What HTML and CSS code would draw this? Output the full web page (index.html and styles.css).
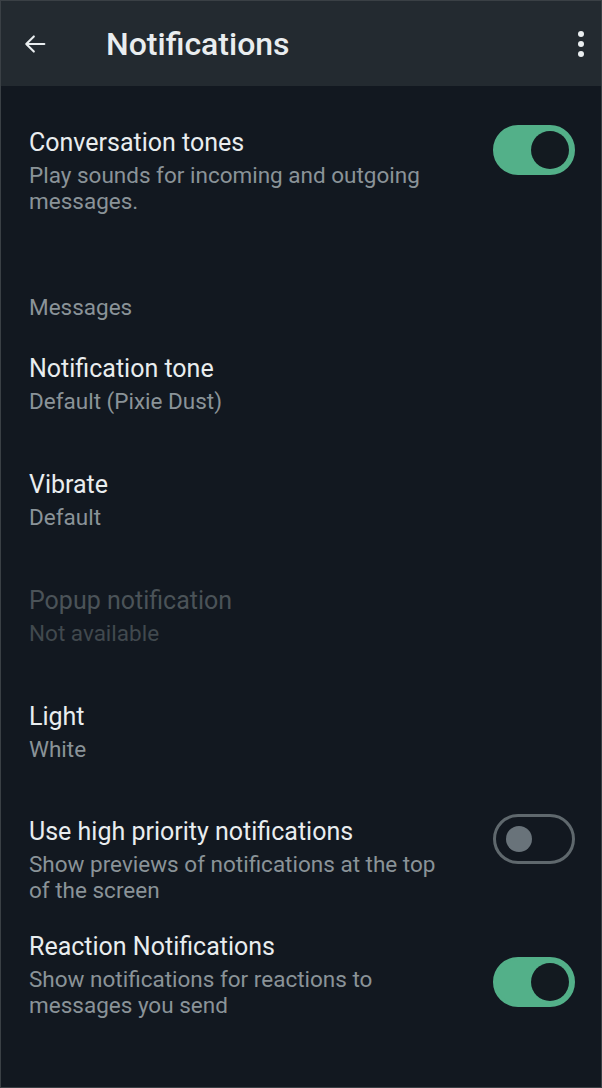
FILE: index.html
```html
<!DOCTYPE html>
<html>
  <head>
    <meta charset="UTF-8">
    <meta name="viewport" content="width=device-width,initial-scale=1">
    <title>Notifications</title>
    <link rel="stylesheet" href="styles.css">
  </head>
  <body>
    <div class="screen">
      <header class="appbar">
        <button class="icon-btn back" title="Back">
          <svg width="28" height="28" viewBox="0 0 24 24"><path d="M20 12H4.5M11 5.5L4.5 12l6.5 6.5" fill="none" stroke="#e9edef" stroke-width="1.8" stroke-linecap="round" stroke-linejoin="round"/></svg>
        </button>
        <h1>Notifications</h1>
        <button class="icon-btn more" title="More options">
          <svg width="8" height="28" viewBox="0 0 8 28"><circle cx="4" cy="4" r="3" fill="#e9edef"/><circle cx="4" cy="14" r="3" fill="#e9edef"/><circle cx="4" cy="24" r="3" fill="#e9edef"/></svg>
        </button>
      </header>

      <main class="list">
        <div class="item toggle spaced">
          <div class="text">
            <div class="title">Conversation tones</div>
            <div class="sub">Play sounds for incoming and outgoing messages.</div>
          </div>
          <span class="switch on"><span class="knob"></span></span>
        </div>

        <div class="section-title">Messages</div>

        <div class="item">
          <div class="text">
            <div class="title">Notification tone</div>
            <div class="sub">Default (Pixie Dust)</div>
          </div>
        </div>
        <div class="item">
          <div class="text">
            <div class="title">Vibrate</div>
            <div class="sub">Default</div>
          </div>
        </div>
        <div class="item disabled">
          <div class="text">
            <div class="title">Popup notification</div>
            <div class="sub">Not available</div>
          </div>
        </div>
        <div class="item">
          <div class="text">
            <div class="title">Light</div>
            <div class="sub">White</div>
          </div>
        </div>

        <div class="item toggle spaced">
          <div class="text">
            <div class="title">Use high priority notifications</div>
            <div class="sub">Show previews of notifications at the top of the screen</div>
          </div>
          <span class="switch"><span class="knob"></span></span>
        </div>
        <div class="item toggle">
          <div class="text">
            <div class="title">Reaction Notifications</div>
            <div class="sub">Show notifications for reactions to messages you send</div>
          </div>
          <span class="switch on low"><span class="knob"></span></span>
        </div>
      </main>
    </div>
  </body>
</html>
```

FILE: styles.css
```css
* {
  box-sizing: border-box;
}
body {
  margin: 0;
  background-color: #121820;
  font-family: Roboto, 'Noto Sans', sans-serif;
  color: #e9edef;
}
.screen {
  width: 602px;
  height: 1088px;
  border: 1px solid #3a4045;
  background-color: #121820;
  overflow: hidden;
}
.appbar {
  height: 85px;
  background-color: #232a30;
  display: flex;
  align-items: center;
  padding: 0 16px 0 20px;
}
.appbar h1 {
  flex: 1;
  margin: 0 0 0 57px;
  font-size: 32px;
  font-weight: 500;
  color: #e9edef;
}
.icon-btn {
  background: none;
  border: none;
  padding: 0;
  display: flex;
  align-items: center;
  cursor: pointer;
}
.list {
  padding-top: 15px;
}
.item {
  display: flex;
  align-items: flex-start;
  padding: 28px 26px 28px 28px;
  gap: 43px;
}
.item.toggle {
  padding-top: 15px;
  padding-bottom: 14px;
}
.item.spaced {
  margin-top: 12px;
}
.text {
  flex: 1;
}
.title {
  font-size: 25px;
  line-height: 30px;
  color: #e9edef;
}
.sub {
  margin-top: 4px;
  font-size: 22.5px;
  line-height: 26px;
  color: #8a9398;
}
.disabled .title {
  color: #4b5358;
}
.disabled .sub {
  color: #41494e;
}
.section-title {
  padding: 66px 28px 6px;
  font-size: 22.5px;
  line-height: 26px;
  color: #8a9398;
}
.switch {
  flex: none;
  width: 82px;
  height: 50px;
  margin-top: -3px;
  border-radius: 25px;
  border: 3px solid #5f686d;
  display: flex;
  align-items: center;
  padding-left: 10px;
}
.switch .knob {
  width: 26px;
  height: 26px;
  border-radius: 50%;
  background-color: #69737a;
}
.switch.on {
  background-color: #53b089;
  border-color: #53b089;
  justify-content: flex-end;
  padding: 0 3px 0 0;
}
.switch.on .knob {
  width: 38px;
  height: 38px;
  background-color: #131a20;
}
.switch.low {
  margin-top: 25px;
}
```
